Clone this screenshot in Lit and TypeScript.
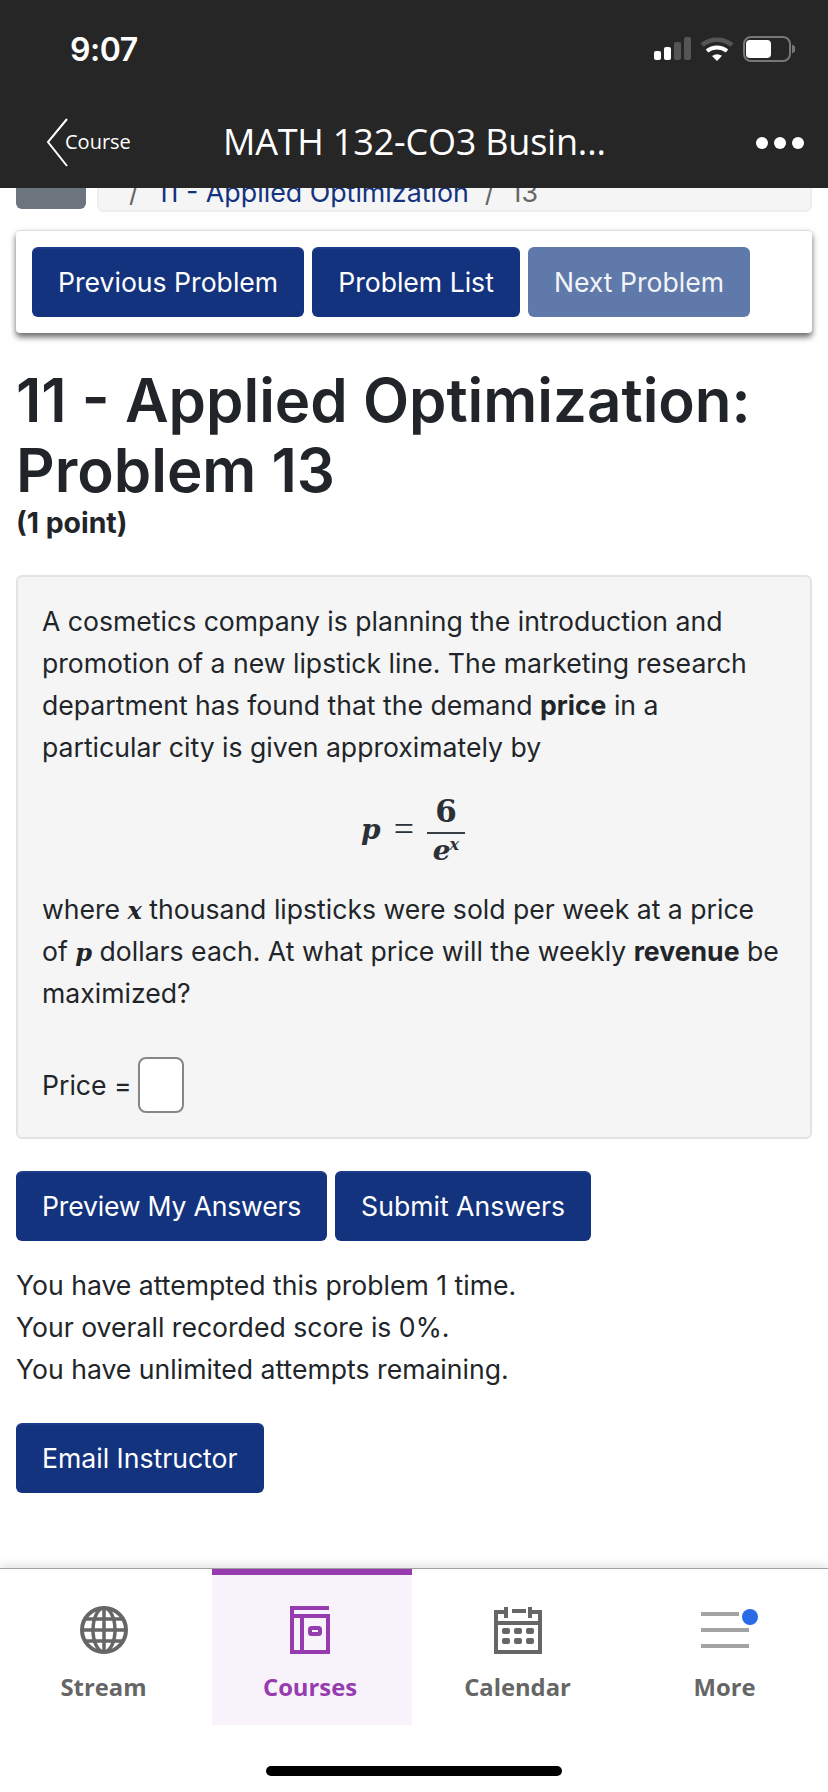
import { html, css, LitElement } from "lit";
import { customElement } from "lit/decorators.js";

@customElement("app-root")
export class AppRoot extends LitElement {
  static styles = css`
    :host {
      display: flex;
      flex-direction: column;
      width: 828px;
      height: 1792px;
      overflow: hidden;
      background: #fff;
      color: #212529;
      font-family: Inter, "Liberation Sans", sans-serif;
      font-size: 26.6px;
      line-height: 42px;
    }

    .top {
      position: relative;
      z-index: 2;
      height: 188px;
      flex: none;
      background: #262626;
      color: #fff;
    }
    .status {
      height: 98px;
      display: flex;
      justify-content: space-between;
      align-items: center;
      padding: 0 32px 0 70px;
    }
    .time {
      font-size: 32px;
      font-weight: 600;
      letter-spacing: -0.5px;
      margin-top: 2px;
    }
    .nav {
      display: flex;
      align-items: center;
      height: 90px;
      padding: 0 24px 0 46px;
      font-family: "Open Sans", sans-serif;
    }
    .course {
      font-size: 20px;
      width: 158px;
      margin: -2px 0 0 -5px;
    }
    .title {
      font-size: 36px;
      flex: 1;
      letter-spacing: -0.2px;
      margin-top: -2px;
    }
    .crumbs {
      display: flex;
      gap: 11px;
      margin: -50px 16px 0;
      flex: none;
    }
    .home {
      width: 70px;
      height: 71px;
      background: #6c757d;
      border-radius: 0 0 6px 6px;
    }
    .crumb-box {
      flex: 1;
      height: 74px;
      padding: 33px 0 0 30px;
      box-sizing: border-box;
      display: flex;
      gap: 16px;
      align-items: center;
      background: #f5f5f5;
      border: 2px solid #eee;
      border-radius: 6px;
      font-size: 26.8px;
      color: #666;
    }
    .crumb-box a {
      color: #14337f;
      margin-left: 2px;
    }
    .toolbar {
      display: flex;
      gap: 8px;
      margin: 18px 16px 0;
      padding: 16px;
      height: 70px;
      background: #fff;
      border-top: 1px solid #ddd;
      border-radius: 4px;
      box-shadow: 0 4px 6px rgba(0, 0, 0, 0.6);
      flex: none;
    }
    .btn {
      display: flex;
      align-items: center;
      height: 70px;
      padding: 0 26px 2px;
      box-sizing: border-box;
      background: #14337f;
      border-top: 2px solid #1d3c8b;
      border-radius: 6px;
      color: #fff;
    }
    .btn.off {
      background: #6079ab;
      border-top-color: #6079ab;
      color: #f2f4f8;
    }
    .btn.tight {
      letter-spacing: -0.2px;
    }
    h1 {
      margin: 32px 16px 0;
      font-size: 60px;
      line-height: 70px;
      font-weight: 600;
    }
    .points {
      margin: -3px 16px 0;
      height: 42px;
      font-weight: 700;
      font-size: 28.4px;
    }
    .well {
      margin: 31px 16px 0;
      height: 564px;
      box-sizing: border-box;
      padding: 23px 24px 0;
      background: #f5f5f5;
      border: 2px solid #e3e3e3;
      border-radius: 6px;
      flex: none;
    }
    .well p {
      margin: 0;
    }
    .m {
      font-family: "DejaVu Serif", serif;
      font-style: italic;
      font-weight: 700;
      font-size: 24px;
      line-height: 0;
    }
    .eq {
      display: flex;
      justify-content: center;
      align-items: center;
      gap: 13px;
      height: 116px;
      margin-top: 4px;
      padding-right: 2px;
      font-family: "DejaVu Serif", serif;
      font-size: 31px;
      line-height: 1;
      color: #2b3036;
    }
    .eq .m {
      font-size: 28px;
      line-height: 1;
    }
    .eq-sign {
      font-family: "Liberation Serif", serif;
      font-size: 36px;
      margin-top: -3px;
    }
    .frac {
      display: flex;
      flex-direction: column;
      align-items: center;
      width: 38px;
    }
    .num {
      font-weight: 600;
      padding-bottom: 5px;
      border-bottom: 2px solid #3a3f44;
      width: 100%;
      text-align: center;
    }
    .eq .den {
      padding-top: 3px;
      white-space: nowrap;
    }
    sup {
      font-size: 16px;
      line-height: 0;
      vertical-align: 10px;
      margin-left: -1px;
    }
    .price {
      display: flex;
      align-items: center;
      gap: 6px;
      margin-top: 43px;
    }
    .input {
      width: 46px;
      height: 56px;
      box-sizing: border-box;
      background: #fff;
      border: 2px solid #868686;
      border-radius: 8px;
    }
    .row {
      display: flex;
      gap: 8px;
      margin: 32px 16px 0;
      flex: none;
    }
    .info {
      margin: 23px 16px 0;
    }
    .email {
      margin-top: 33px;
    }
    .tabs {
      margin-top: auto;
      flex: none;
      height: 223px;
      display: flex;
      flex-direction: column;
      border-top: 1px solid #a0a0a0;
      box-shadow: 0 -4px 8px rgba(0, 0, 0, 0.1);
      background: #fff;
    }
    .tab-row {
      display: grid;
      grid-template-columns: repeat(4, 207px);
      height: 156px;
      font-family: "Open Sans", sans-serif;
      font-weight: 700;
      font-size: 23.8px;
      line-height: 32px;
      color: #666;
    }
    .tab {
      display: flex;
      flex-direction: column;
      align-items: center;
      padding-top: 37px;
      gap: 17px;
      box-sizing: border-box;
    }
    .tab svg {
      display: block;
    }
    .tab.active {
      margin: 0 2px 0 5px;
      padding: 31px 4px 0 0;
      color: #963cae;
      background: #f8f3fb;
      border-top: 6px solid #963cae;
    }
    .indicator {
      align-self: center;
      width: 296px;
      height: 10px;
      margin-top: 41px;
      border-radius: 5px;
      background: #000;
    }
  `;

  render() {
    return html`
      <div class="top">
        <div class="status">
          <span class="time">9:07</span>
          <svg width="142" height="26" viewBox="0 0 142 26">
            <rect x="0" y="15" width="7" height="9" rx="2" fill="#fff" />
            <rect x="10" y="11" width="7" height="13" rx="2" fill="#fff" />
            <rect x="20" y="6" width="7" height="18" rx="2" fill="#555" />
            <rect x="30" y="1" width="7" height="23" rx="2" fill="#555" />
            <path d="M48 9a24 24 0 0 1 30 0" fill="none" stroke="#555" stroke-width="4.5" />
            <path d="M53 15a16 16 0 0 1 20 0" fill="none" stroke="#fff" stroke-width="4" />
            <path d="M58 20a9 9 0 0 1 10 -.2L63 25z" fill="#fff" />
            <rect x="90" y="1" width="46" height="24" rx="7" fill="none" stroke="#777" stroke-width="2" />
            <rect x="92" y="4" width="25" height="18" rx="4" fill="#fff" />
            <path d="M138 8.500l3 2v5l-3 2z" fill="#777" />
          </svg>
        </div>
        <div class="nav">
          <svg width="24" height="50" viewBox="0 0 24 50" fill="none" stroke="#fff" stroke-width="2">
            <path d="M21 1 2 24l19 24" />
          </svg>
          <span class="course">Course</span>
          <span class="title">MATH 132-CO3 Busin...</span>
          <svg width="48" height="12" viewBox="0 0 48 12" fill="#fff">
            <circle cx="6" cy="6" r="6" />
            <circle cx="24" cy="6" r="6" />
            <circle cx="42" cy="6" r="6" />
          </svg>
        </div>
      </div>

      <div class="crumbs">
        <div class="home"></div>
        <div class="crumb-box">
          <span>/</span><a>11 - Applied Optimization</a><span>/</span><span>13</span>
        </div>
      </div>

      <div class="toolbar">
        <div class="btn">Previous Problem</div>
        <div class="btn">Problem List</div>
        <div class="btn off">Next Problem</div>
      </div>

      <h1>11 - Applied Optimization: Problem 13</h1>
      <div class="points">(1 point)</div>

      <div class="well">
        <p>
          A cosmetics company is planning the introduction and promotion of a new lipstick line. The
          marketing research department has found that the demand <b>price</b> in a<br />
          particular city is given approximately by
        </p>
        <div class="eq">
          <span class="m">p</span>
          <span class="eq-sign">=</span>
          <span class="frac">
            <span class="num">6</span>
            <span class="den m">e<sup>x</sup></span>
          </span>
        </div>
        <p>
          where <span class="m">x</span> thousand lipsticks were sold per week at a price<br />
          of <span class="m">p</span> dollars each. At what price will the weekly <b>revenue</b> be
          maximized?
        </p>
        <div class="price"><span>Price =</span><div class="input"></div></div>
      </div>

      <div class="row">
        <div class="btn tight">Preview My Answers</div>
        <div class="btn">Submit Answers</div>
      </div>

      <div class="info">
        You have attempted this problem 1 time.<br />
        Your overall recorded score is 0%.<br />
        You have unlimited attempts remaining.
      </div>

      <div class="row email">
        <div class="btn">Email Instructor</div>
      </div>

      <div class="tabs">
        <div class="tab-row">
          <div class="tab">
            <svg width="48" height="48" viewBox="0 0 48 48" fill="none" stroke="#666" stroke-width="3.500">
              <circle cx="24" cy="24" r="22" stroke-width="4" />
              <ellipse cx="24" cy="24" rx="11" ry="22" />
              <path d="M24 2v44M2 24h44M5 13h38M5 35h38" />
            </svg>
            Stream
          </div>
          <div class="tab active">
            <svg width="40" height="48" viewBox="0 0 40 48" fill="none" stroke="#963cae" stroke-width="4">
              <path d="M39 2H2v44h36V10H2M12 10v36" />
              <rect x="20" y="22" width="10" height="6" rx="1.500" />
            </svg>
            Courses
          </div>
          <div class="tab">
            <svg width="48" height="48" viewBox="0 0 48 48" fill="none" stroke="#666" stroke-width="4">
              <path d="M10 6H2v40h44V6h-8M2 17h44M18 5h14" />
              <path d="M12 1v11M36 1v11" />
              <g fill="#666" stroke="none">
                <rect x="8" y="22" width="8" height="6" rx="2" />
                <rect x="20" y="22" width="8" height="6" rx="2" />
                <rect x="32" y="22" width="8" height="6" rx="2" />
                <rect x="8" y="32" width="8" height="6" rx="2" />
                <rect x="20" y="32" width="8" height="6" rx="2" />
                <rect x="32" y="32" width="8" height="6" rx="2" />
              </g>
            </svg>
            Calendar
          </div>
          <div class="tab">
            <svg width="48" height="48" viewBox="0 0 48 48" style="overflow: visible" stroke="#a3a3a3" stroke-width="4">
              <path d="M0 8h38M0 24h48M0 40h48" />
              <circle cx="49" cy="11" r="8" fill="#2a6be6" stroke="none" />
            </svg>
            More
          </div>
        </div>
        <div class="indicator"></div>
      </div>
    `;
  }
}
